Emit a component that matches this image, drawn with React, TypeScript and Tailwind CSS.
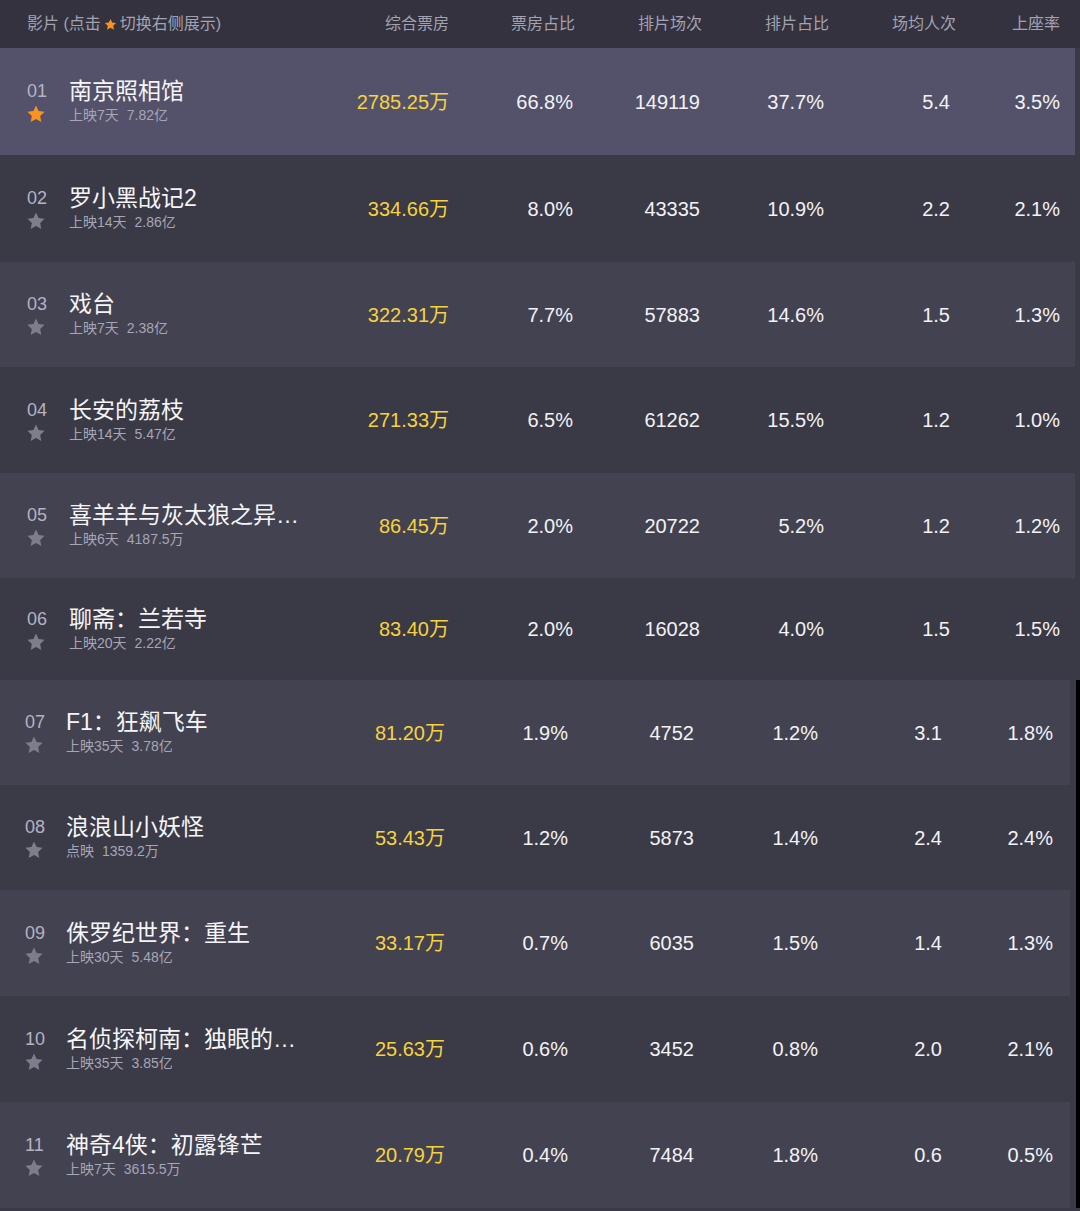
const font = { fontFamily: '"Liberation Sans", "Noto Sans CJK SC", sans-serif' };

type Movie = {
  rank: string;
  title: string;
  days: string;
  total: string;
  box: string;
  boxRate: string;
  shows: string;
  showRate: string;
  avg: string;
  seat: string;
  h: string;
};

const topMovies: Movie[] = [
  { rank: "01", title: "南京照相馆", days: "上映7天", total: "7.82亿", box: "2785.25万", boxRate: "66.8%", shows: "149119", showRate: "37.7%", avg: "5.4", seat: "3.5%", h: "h-[107px]" },
  { rank: "02", title: "罗小黑战记2", days: "上映14天", total: "2.86亿", box: "334.66万", boxRate: "8.0%", shows: "43335", showRate: "10.9%", avg: "2.2", seat: "2.1%", h: "h-[107px]" },
  { rank: "03", title: "戏台", days: "上映7天", total: "2.38亿", box: "322.31万", boxRate: "7.7%", shows: "57883", showRate: "14.6%", avg: "1.5", seat: "1.3%", h: "h-[105px]" },
  { rank: "04", title: "长安的荔枝", days: "上映14天", total: "5.47亿", box: "271.33万", boxRate: "6.5%", shows: "61262", showRate: "15.5%", avg: "1.2", seat: "1.0%", h: "h-[106px]" },
  { rank: "05", title: "喜羊羊与灰太狼之异…", days: "上映6天", total: "4187.5万", box: "86.45万", boxRate: "2.0%", shows: "20722", showRate: "5.2%", avg: "1.2", seat: "1.2%", h: "h-[105px]" },
  { rank: "06", title: "聊斋：兰若寺", days: "上映20天", total: "2.22亿", box: "83.40万", boxRate: "2.0%", shows: "16028", showRate: "4.0%", avg: "1.5", seat: "1.5%", h: "h-[102px]" },
];

const bottomMovies: Movie[] = [
  { rank: "07", title: "F1：狂飙飞车", days: "上映35天", total: "3.78亿", box: "81.20万", boxRate: "1.9%", shows: "4752", showRate: "1.2%", avg: "3.1", seat: "1.8%", h: "h-[105px]" },
  { rank: "08", title: "浪浪山小妖怪", days: "点映", total: "1359.2万", box: "53.43万", boxRate: "1.2%", shows: "5873", showRate: "1.4%", avg: "2.4", seat: "2.4%", h: "h-[105px]" },
  { rank: "09", title: "侏罗纪世界：重生", days: "上映30天", total: "5.48亿", box: "33.17万", boxRate: "0.7%", shows: "6035", showRate: "1.5%", avg: "1.4", seat: "1.3%", h: "h-[106px]" },
  { rank: "10", title: "名侦探柯南：独眼的…", days: "上映35天", total: "3.85亿", box: "25.63万", boxRate: "0.6%", shows: "3452", showRate: "0.8%", avg: "2.0", seat: "2.1%", h: "h-[106px]" },
  { rank: "11", title: "神奇4侠：初露锋芒", days: "上映7天", total: "3615.5万", box: "20.79万", boxRate: "0.4%", shows: "7484", showRate: "1.8%", avg: "0.6", seat: "0.5%", h: "h-[106px]" },
];

const headers = ["综合票房", "票房占比", "排片场次", "排片占比", "场均人次", "上座率"];

function Star({ className }: { className: string }) {
  return (
    <svg viewBox="0 0 24 24" className={className} fill="currentColor">
      <path d="M12 1.8l3.1 6.6 7.2.9-5.3 5 1.4 7.2L12 18l-6.4 3.5 1.4-7.2-5.3-5 7.2-.9z" />
    </svg>
  );
}

function Row({ m, odd, first, bottom }: { m: Movie; odd: boolean; first: boolean; bottom: boolean }) {
  const bg = first ? "bg-[#53526a]" : odd ? "bg-[#434251]" : "bg-transparent";
  const cols = bottom
    ? "grid-cols-[445px_123px_126px_124px_124px_111px]"
    : "grid-cols-[449px_124px_127px_124px_126px_110px]";
  return (
    <div className={`${m.h} ${bg} ${bottom ? "mr-[6px]" : "mr-[5px]"} grid ${cols} items-center text-[20px] text-[#f2f2f5]`}>
      <div className="flex items-center justify-between h-full">
        <div className={`flex pt-[1px] ${bottom ? "pl-[25px]" : "pl-[27px]"}`}>
          <div className="flex flex-col items-start w-[42px]">
            <span className="text-[18px] leading-[26px] text-[#b4b3c2]">{m.rank}</span>
            <Star className={`w-[20px] h-[20px] -ml-[1px] ${first ? "text-[#f7931e]" : "text-[#7e7d8c]"}`} />
          </div>
          <div className={`flex flex-col ${bottom ? "-ml-[1px]" : ""}`}>
            <span className="text-[23px] leading-[26px] text-[#f5f5f7] whitespace-nowrap">{m.title}</span>
            <span className="text-[14px] leading-[22px] text-[#a7a6b5] flex gap-[8px]">
              <span>{m.days}</span>
              <span>{m.total}</span>
            </span>
          </div>
        </div>
        <span className="text-[20px] text-[#f6d23f]">{m.box}</span>
      </div>
      <span className="text-right">{m.boxRate}</span>
      <span className="text-right">{m.shows}</span>
      <span className="text-right">{m.showRate}</span>
      <span className="text-right">{m.avg}</span>
      <span className="text-right">{m.seat}</span>
    </div>
  );
}

export default function App() {
  return (
    <div className="w-[1080px] h-[1211px] overflow-hidden bg-[#3a3946]" style={font}>
      <div className="h-[48px] bg-[#33323e] grid grid-cols-[449px_126px_127px_127px_127px_104px] items-center text-[16px] text-[#a3a2b2]">
        <div className="flex items-center justify-between">
          <span className="pl-[27px] flex items-center">
            影片 (点击
            <Star className="w-[13px] h-[13px] mx-[3px] text-[#f7931e]" />
            切换右侧展示)
          </span>
          <span>{headers[0]}</span>
        </div>
        {headers.slice(1).map((h) => (
          <span key={h} className="text-right">
            {h}
          </span>
        ))}
      </div>

      <div>
        {topMovies.map((m, i) => (
          <Row key={m.rank} m={m} odd={i % 2 === 0} first={i === 0} bottom={false} />
        ))}
      </div>

      <div className="flex">
        <div className="w-[1076px] bg-[#3b3a47]">
          {bottomMovies.map((m, i) => (
            <Row key={m.rank} m={m} odd={i % 2 === 0} first={false} bottom={true} />
          ))}
        </div>
        <div className="flex-1 bg-black" />
      </div>
    </div>
  );
}
